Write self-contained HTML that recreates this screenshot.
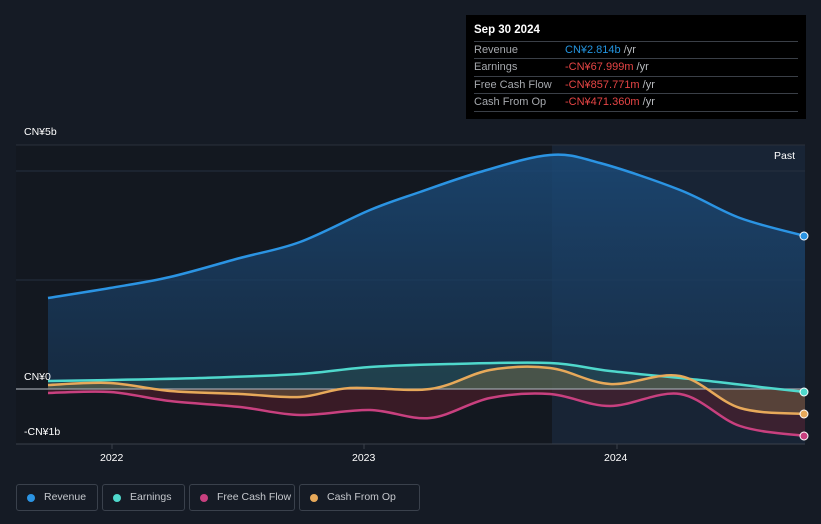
<!DOCTYPE html><html><head><meta charset="utf-8"><style>
html,body{margin:0;width:821px;height:524px;overflow:hidden}
body{background:#151b25;font-family:"Liberation Sans",sans-serif;position:relative}
.tt{position:absolute;left:466px;top:15px;width:340px;height:104px;background:#000;color:#fff;font-size:11px}
.tt .h{position:absolute;left:8px;top:9px;font-weight:bold;font-size:11.5px}
.row{position:absolute;left:8px;width:324px;height:17px;border-top:1px solid #3a3f47;line-height:17px;color:#a6a9ae;white-space:nowrap}
.row span{position:absolute;left:91px}
.b{color:#2394df}.r{color:#e64545}.w{color:#b8bbbf}
em{font-style:normal}
.lbl{position:absolute;color:#fff;font-size:10.5px}
.leg{position:absolute;top:484px;height:27px;border:1px solid #3a414c;border-radius:3px;color:#c5c8cd;font-size:10.5px;line-height:25px;box-sizing:border-box;white-space:nowrap}
.leg i{position:absolute;left:10px;top:9px;width:8px;height:8px;border-radius:50%}
.leg b{font-weight:normal;position:absolute;left:27px}
</style></head><body>
<svg width="821" height="524" style="position:absolute;left:0;top:0">
<defs><linearGradient id="rg" x1="0" y1="0" x2="0" y2="1"><stop offset="0" stop-color="#1b4a78" stop-opacity=".85"/><stop offset="1" stop-color="#183452" stop-opacity=".65"/></linearGradient></defs>
<rect x="552" y="145" width="253" height="299" fill="#182435"/>
<rect x="16" y="145" width="536" height="299" fill="#131820"/>
<line x1="16" y1="145" x2="805" y2="145" stroke="#2a313c"/>
<line x1="16" y1="171" x2="805" y2="171" stroke="#263040"/>
<line x1="16" y1="280" x2="805" y2="280" stroke="#263040"/>
<path id="revA" fill="url(#rg)"/>
<path id="fcfA" fill="#5a1f2c" opacity=".55"/>
<path id="earA" fill="#2c5a5a" opacity=".45"/>
<path id="cfoA" fill="#7a6a45" opacity=".45"/>
<line x1="16" y1="389" x2="805" y2="389" stroke="#9ca0a8" stroke-width="1.2"/>
<line x1="16" y1="444" x2="805" y2="444" stroke="#3a404a"/>
<path id="rev" fill="none" stroke="#2b94e3" stroke-width="2.5"/>
<path id="ear" fill="none" stroke="#4fd8cc" stroke-width="2.5"/>
<path id="fcf" fill="none" stroke="#c8407f" stroke-width="2.5"/>
<path id="cfo" fill="none" stroke="#e7a95a" stroke-width="2.5"/>
<circle cx="804" cy="236" r="4" fill="#2b94e3" stroke="#fff" stroke-width="1"/>
<circle cx="804" cy="392" r="4" fill="#4fd8cc" stroke="#fff" stroke-width="1"/>
<circle cx="804" cy="414" r="4" fill="#e7a95a" stroke="#fff" stroke-width="1"/>
<circle cx="804" cy="436" r="4" fill="#c8407f" stroke="#fff" stroke-width="1"/>
<line x1="112" y1="444" x2="112" y2="449" stroke="#3a404a"/>
<line x1="364" y1="444" x2="364" y2="449" stroke="#3a404a"/>
<line x1="617" y1="444" x2="617" y2="449" stroke="#3a404a"/>
</svg>
<div class="lbl" style="left:24px;top:126px">CN¥5b</div>
<div class="lbl" style="left:24px;top:371px">CN¥0</div>
<div class="lbl" style="left:24px;top:426px">-CN¥1b</div>
<div class="lbl" style="left:774px;top:150px">Past</div>
<div class="lbl" style="left:100px;top:452px">2022</div>
<div class="lbl" style="left:352px;top:452px">2023</div>
<div class="lbl" style="left:604px;top:452px">2024</div>
<div class="tt"><div class="h">Sep 30 2024</div>
<div class="row" style="top:26px">Revenue<span><em class="b">CN¥2.814b</em> <em class="w">/yr</em></span></div>
<div class="row" style="top:43px">Earnings<span><em class="r">-CN¥67.999m</em> <em class="w">/yr</em></span></div>
<div class="row" style="top:61px">Free Cash Flow<span><em class="r">-CN¥857.771m</em> <em class="w">/yr</em></span></div>
<div class="row" style="top:78px;border-bottom:1px solid #3a3f47">Cash From Op<span><em class="r">-CN¥471.360m</em> <em class="w">/yr</em></span></div>
</div>
<div class="leg" style="left:16px;width:82px"><i style="background:#2b94e3"></i><b>Revenue</b></div>
<div class="leg" style="left:102px;width:83px"><i style="background:#4fd8cc"></i><b>Earnings</b></div>
<div class="leg" style="left:189px;width:106px"><i style="background:#c8407f"></i><b>Free Cash Flow</b></div>
<div class="leg" style="left:299px;width:121px"><i style="background:#e7a95a"></i><b>Cash From Op</b></div>
<script>
function cr(p){let d="M"+p[0][0]+","+p[0][1];for(let i=0;i<p.length-1;i++){const a=p[i-1]||p[i],b=p[i],c=p[i+1],e=p[i+2]||c;d+=" C"+(b[0]+(c[0]-a[0])/6)+","+(b[1]+(c[1]-a[1])/6)+" "+(c[0]-(e[0]-b[0])/6)+","+(c[1]-(e[1]-b[1])/6)+" "+c[0]+","+c[1];}return d;}
const S={rev:[[48,298],[110,288],[170,277],[240,258],[300,242],[370,210],[420,192],[480,172],[550,155],[600,163],[680,190],[740,218],[805,236]],
ear:[[48,381],[110,380],[200,378],[300,374],[370,367],[450,364],[550,363],[610,371],[700,380],[760,387],[805,392]],
fcf:[[48,393],[110,392],[170,401],[240,407],[300,415],[370,410],[430,418],[490,398],[550,394],[610,406],[680,394],[740,426],[805,436]],
cfo:[[48,385],[110,383],[170,391],[240,394],[300,397],[350,388],[430,389],[490,370],[550,368],[610,384],[680,376],[740,408],[805,414]]};
for(const k in S){const d=cr(S[k]);document.getElementById(k).setAttribute("d",d);document.getElementById(k+"A").setAttribute("d",d+" L805,389 L48,389 Z");}
</script>
</body></html>
